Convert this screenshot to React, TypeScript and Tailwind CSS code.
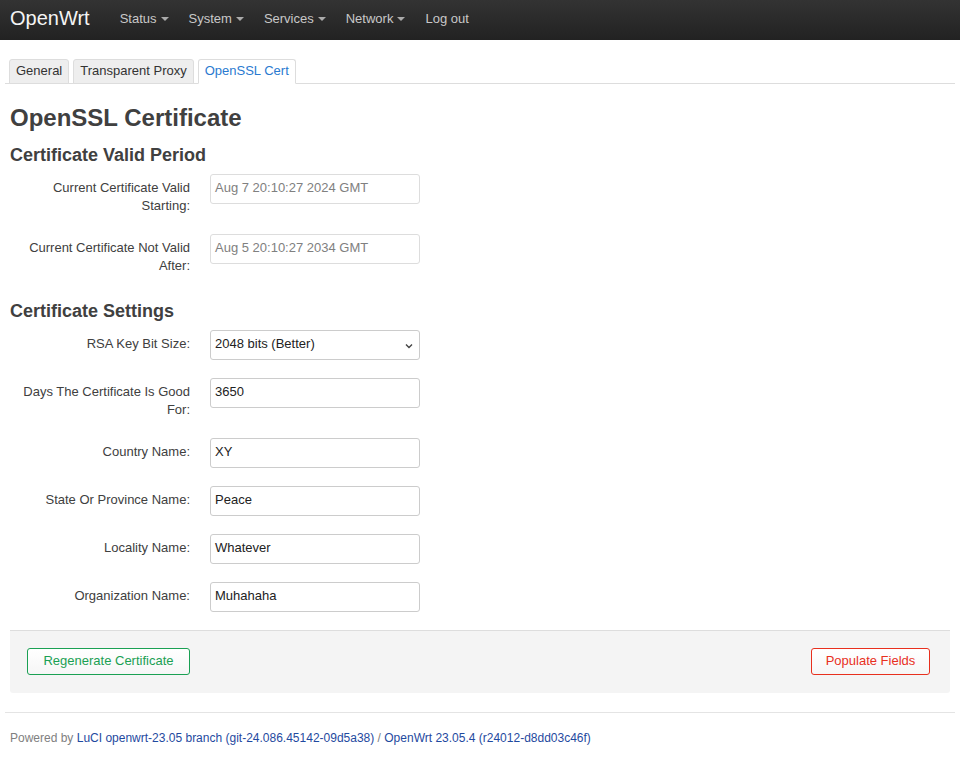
import React from "react";

const font = { fontFamily: '"Liberation Sans", Arial, sans-serif' };

const navItems = ["Status", "System", "Services", "Network"];

function Caret() {
  return (
    <span className="ml-[4px] inline-block h-0 w-0 border-x-[4px] border-t-[4px] border-x-transparent border-t-[#aaa] align-middle" />
  );
}

function Row({
  label,
  value,
  readOnly,
  select,
}: {
  label: string[];
  value: string;
  readOnly?: boolean;
  select?: boolean;
}) {
  return (
    <div className="mb-[18px] flex items-start">
      <div className="w-[180px] pt-[5px] pb-[1px] text-right text-[13px] leading-[18px] text-[#404040]">
        {label.map((l, i) => (
          <div key={i}>{l}</div>
        ))}
      </div>
      <div className="ml-[20px]">
        {select ? (
          <div className="relative flex h-[30px] w-[210px] items-center rounded-[3px] border border-[#ccc] bg-white pb-[2px] pl-[4px] text-[13px] text-[#222]">
            {value}
            <svg className="absolute right-[6px] top-[12px]" width="8" height="6" viewBox="0 0 8 6">
              <path d="M1 1.5 L4 4.5 L7 1.5" fill="none" stroke="#444" strokeWidth="1.4" />
            </svg>
          </div>
        ) : (
          <div
            className={
              "flex h-[30px] w-[210px] items-center rounded-[3px] border bg-white pb-[2px] pl-[4px] text-[13px] " +
              (readOnly ? "border-[#ddd] text-[#808080]" : "border-[#ccc] text-[#222]")
            }
          >
            {value}
          </div>
        )}
      </div>
    </div>
  );
}

export default function App() {
  return (
    <div className="min-h-[765px] bg-white" style={font}>
      {/* top bar */}
      <div className="flex h-[40px] items-center bg-gradient-to-b from-[#333] to-[#222] pl-[10px]">
        <span className="mr-[20px] pb-[4px] text-[20px] leading-none text-[#f4f4f4]">OpenWrt</span>
        {navItems.map((n) => (
          <span key={n} className="flex items-center px-[10px] pb-[3px] text-[13px] text-[#c8c8c8]">
            {n}
            <Caret />
          </span>
        ))}
        <span className="px-[10px] pb-[3px] text-[13px] text-[#c8c8c8]">Log out</span>
      </div>

      <div className="px-[10px] pt-[19px]">
        {/* tabs */}
        <div className="-mx-[5px] flex gap-[4px] border-b border-[#ddd] pl-[4px]">
          <div className="-mb-px h-[25px] rounded-t-[3px] border border-[#ddd] bg-[#eee] px-[6px] pt-[3px] text-[13px] leading-[16px] text-[#333]">
            General
          </div>
          <div className="-mb-px h-[25px] rounded-t-[3px] border border-[#ddd] bg-[#eee] px-[6px] pt-[3px] text-[13px] leading-[16px] text-[#333]">
            Transparent Proxy
          </div>
          <div className="-mb-px h-[25px] rounded-t-[3px] border border-[#ddd] border-b-white bg-white px-[6px] pt-[3px] text-[13px] leading-[16px] text-[#2a7ad0]">
            OpenSSL Cert
          </div>
        </div>

        <h2 className="mt-[20px] text-[24px] font-bold leading-[28px] text-[#404040]">
          OpenSSL Certificate
        </h2>

        <h3 className="mt-[13px] mb-[9px] text-[18px] font-bold leading-[20px] text-[#404040]">
          Certificate Valid Period
        </h3>
        <Row label={["Current Certificate Valid", "Starting:"]} value="Aug 7 20:10:27 2024 GMT" readOnly />
        <Row label={["Current Certificate Not Valid", "After:"]} value="Aug 5 20:10:27 2034 GMT" readOnly />

        <h3 className="mt-[25px] mb-[9px] text-[18px] font-bold leading-[20px] text-[#404040]">
          Certificate Settings
        </h3>
        <Row label={["RSA Key Bit Size:"]} value="2048 bits (Better)" select />
        <Row label={["Days The Certificate Is Good", "For:"]} value="3650" />
        <Row label={["Country Name:"]} value="XY" />
        <Row label={["State Or Province Name:"]} value="Peace" />
        <Row label={["Locality Name:"]} value="Whatever" />
        <Row label={["Organization Name:"]} value="Muhahaha" />

        {/* actions */}
        <div className="flex items-center justify-between rounded-b-[3px] border-t border-[#ddd] bg-[#f4f4f4] pt-[17px] pb-[18px] pl-[17px] pr-[20px]">
          <button className="h-[27px] w-[163px] rounded-[3px] border border-[#1aa053] bg-gradient-to-b from-white to-[#f6f6f6] pb-[2px] text-[13px] text-[#1aa053]">
            Regenerate Certificate
          </button>
          <button className="h-[27px] w-[119px] rounded-[3px] border border-[#e8301e] bg-gradient-to-b from-white to-[#f6f6f6] pb-[2px] text-[13px] text-[#e8301e]">
            Populate Fields
          </button>
        </div>

        {/* footer */}
        <div className="-mx-[5px] mt-[19px] border-t border-[#e4e4e4] px-[5px] pt-[16px] text-[12px] text-[#808080]">
          Powered by{" "}
          <span className="text-[#1f4aa0]">LuCI openwrt-23.05 branch (git-24.086.45142-09d5a38)</span> /{" "}
          <span className="text-[#1f4aa0]">OpenWrt 23.05.4 (r24012-d8dd03c46f)</span>
        </div>
      </div>
    </div>
  );
}
